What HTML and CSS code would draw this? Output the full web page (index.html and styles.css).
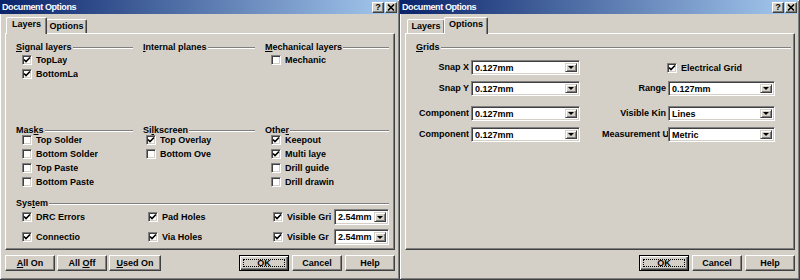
FILE: index.html
```html
<!DOCTYPE html>
<html lang="en">
<head>
    <meta charset="UTF-8">
    <title>Document Options</title>
    <link rel="stylesheet" href="styles.css">
</head>
<body>
<div class="screen">

    <!-- Dialog 1: Layers tab -->
    <div class="dialog">
        <div class="titlebar">
            <span class="title-text">Document Options</span>
            <span class="caption-btns">
                <span class="cap-btn">?</span>
                <span class="cap-btn"><svg width="8" height="7" viewBox="0 0 8 7"><path d="M1 0.5 L7 6.5 M7 0.5 L1 6.5" stroke="#000" stroke-width="1.6"/></svg></span>
            </span>
        </div>
        <div class="dialog-body">
            <div class="tabs">
                <div class="tab tab-layers active">Layers</div>
                <div class="tab tab-options">Options</div>
            </div>
            <div class="tab-panel">
                <div class="layer-grid">
                    <div class="group">
                        <div class="group-head"><span><u>S</u>ignal layers</span></div>
                        <div class="check-list ind-6">
                            <div class="check"><span class="box"><svg width="8" height="8" viewBox="0 0 8 8"><path d="M1 3.5 L3 5.5 L7 1.5" fill="none" stroke="#000" stroke-width="1.6"/></svg></span><span class="check-text">TopLay</span></div>
                            <div class="check"><span class="box"><svg width="8" height="8" viewBox="0 0 8 8"><path d="M1 3.5 L3 5.5 L7 1.5" fill="none" stroke="#000" stroke-width="1.6"/></svg></span><span class="check-text">BottomLa</span></div>
                        </div>
                    </div>
                    <div class="group">
                        <div class="group-head"><span><u>I</u>nternal planes</span></div>
                    </div>
                    <div class="group last">
                        <div class="group-head"><span><u>M</u>echanical layers</span></div>
                        <div class="check-list ind-6">
                            <div class="check"><span class="box"></span><span class="check-text">Mechanic</span></div>
                        </div>
                    </div>

                    <div class="group">
                        <div class="group-head"><span>Mas<u>k</u>s</span></div>
                        <div class="check-list up ind-6">
                            <div class="check"><span class="box"></span><span class="check-text">Top Solder</span></div>
                            <div class="check"><span class="box"></span><span class="check-text">Bottom Solder</span></div>
                            <div class="check"><span class="box"></span><span class="check-text">Top Paste</span></div>
                            <div class="check"><span class="box"></span><span class="check-text">Bottom Paste</span></div>
                        </div>
                    </div>
                    <div class="group">
                        <div class="group-head"><span>Si<u>l</u>kscreen</span></div>
                        <div class="check-list up ind-3">
                            <div class="check"><span class="box"><svg width="8" height="8" viewBox="0 0 8 8"><path d="M1 3.5 L3 5.5 L7 1.5" fill="none" stroke="#000" stroke-width="1.6"/></svg></span><span class="check-text">Top Overlay</span></div>
                            <div class="check"><span class="box"></span><span class="check-text">Bottom Ove</span></div>
                        </div>
                    </div>
                    <div class="group last">
                        <div class="group-head"><span>Othe<u>r</u></span></div>
                        <div class="check-list up ind-6">
                            <div class="check"><span class="box"><svg width="8" height="8" viewBox="0 0 8 8"><path d="M1 3.5 L3 5.5 L7 1.5" fill="none" stroke="#000" stroke-width="1.6"/></svg></span><span class="check-text">Keepout</span></div>
                            <div class="check"><span class="box"><svg width="8" height="8" viewBox="0 0 8 8"><path d="M1 3.5 L3 5.5 L7 1.5" fill="none" stroke="#000" stroke-width="1.6"/></svg></span><span class="check-text">Multi laye</span></div>
                            <div class="check"><span class="box"></span><span class="check-text">Drill guide</span></div>
                            <div class="check"><span class="box"></span><span class="check-text">Drill drawin</span></div>
                        </div>
                    </div>

                    <div class="group system">
                        <div class="group-head"><span>Sys<u>t</u>em</span></div>
                        <div class="system-grid">
                            <div class="sys-cell ind-6">
                                <div class="check"><span class="box"><svg width="8" height="8" viewBox="0 0 8 8"><path d="M1 3.5 L3 5.5 L7 1.5" fill="none" stroke="#000" stroke-width="1.6"/></svg></span><span class="check-text">DRC Errors</span></div>
                            </div>
                            <div class="sys-cell ind-5">
                                <div class="check"><span class="box"><svg width="8" height="8" viewBox="0 0 8 8"><path d="M1 3.5 L3 5.5 L7 1.5" fill="none" stroke="#000" stroke-width="1.6"/></svg></span><span class="check-text">Pad Holes</span></div>
                            </div>
                            <div class="sys-cell ind-8">
                                <div class="check"><span class="box"><svg width="8" height="8" viewBox="0 0 8 8"><path d="M1 3.5 L3 5.5 L7 1.5" fill="none" stroke="#000" stroke-width="1.6"/></svg></span><span class="check-text">Visible Gri</span></div>
                                <div class="combo combo-small"><span class="combo-text">2.54mm</span><span class="combo-btn"><span class="arrow"></span></span></div>
                            </div>
                            <div class="sys-cell ind-6">
                                <div class="check"><span class="box"><svg width="8" height="8" viewBox="0 0 8 8"><path d="M1 3.5 L3 5.5 L7 1.5" fill="none" stroke="#000" stroke-width="1.6"/></svg></span><span class="check-text">Connectio</span></div>
                            </div>
                            <div class="sys-cell ind-5">
                                <div class="check"><span class="box"><svg width="8" height="8" viewBox="0 0 8 8"><path d="M1 3.5 L3 5.5 L7 1.5" fill="none" stroke="#000" stroke-width="1.6"/></svg></span><span class="check-text">Via Holes</span></div>
                            </div>
                            <div class="sys-cell ind-8">
                                <div class="check"><span class="box"><svg width="8" height="8" viewBox="0 0 8 8"><path d="M1 3.5 L3 5.5 L7 1.5" fill="none" stroke="#000" stroke-width="1.6"/></svg></span><span class="check-text">Visible Gr</span></div>
                                <div class="combo combo-small"><span class="combo-text">2.54mm</span><span class="combo-btn"><span class="arrow"></span></span></div>
                            </div>
                        </div>
                    </div>
                </div>
            </div>
            <div class="btn-row">
                <div class="btn-group">
                    <div class="btn"><span><u>A</u>ll On</span></div>
                    <div class="btn"><span>All <u>O</u>ff</span></div>
                    <div class="btn wide"><span><u>U</u>sed On</span></div>
                </div>
                <div class="btn-group right">
                    <div class="btn default"><span class="focus">OK</span></div>
                    <div class="btn"><span>Cancel</span></div>
                    <div class="btn"><span>Help</span></div>
                </div>
            </div>
        </div>
    </div>

    <!-- Dialog 2: Options tab -->
    <div class="dialog">
        <div class="titlebar">
            <span class="title-text">Document Options</span>
            <span class="caption-btns">
                <span class="cap-btn">?</span>
                <span class="cap-btn"><svg width="8" height="7" viewBox="0 0 8 7"><path d="M1 0.5 L7 6.5 M7 0.5 L1 6.5" stroke="#000" stroke-width="1.6"/></svg></span>
            </span>
        </div>
        <div class="dialog-body">
            <div class="tabs">
                <div class="tab tab-layers">Layers</div>
                <div class="tab tab-options active">Options</div>
            </div>
            <div class="tab-panel options-panel">
                <div class="group-head grids-head"><span><u>G</u>rids</span></div>
                <div class="options-grid">
                    <div class="field-label">Snap X</div>
                    <div class="combo"><span class="combo-text">0.127mm</span><span class="combo-btn"><span class="arrow"></span></span></div>
                    <div class="field-label"></div>
                    <div class="check elec"><span class="box"><svg width="8" height="8" viewBox="0 0 8 8"><path d="M1 3.5 L3 5.5 L7 1.5" fill="none" stroke="#000" stroke-width="1.6"/></svg></span><span class="check-text">Electrical Grid</span></div>

                    <div class="field-label">Snap Y</div>
                    <div class="combo"><span class="combo-text">0.127mm</span><span class="combo-btn"><span class="arrow"></span></span></div>
                    <div class="field-label">Range</div>
                    <div class="combo"><span class="combo-text">0.127mm</span><span class="combo-btn"><span class="arrow"></span></span></div>

                    <div class="field-label">Component</div>
                    <div class="combo"><span class="combo-text">0.127mm</span><span class="combo-btn"><span class="arrow"></span></span></div>
                    <div class="field-label">Visible Kin</div>
                    <div class="combo"><span class="combo-text">Lines</span><span class="combo-btn"><span class="arrow"></span></span></div>

                    <div class="field-label">Component</div>
                    <div class="combo"><span class="combo-text">0.127mm</span><span class="combo-btn"><span class="arrow"></span></span></div>
                    <div class="field-label">Measurement U</div>
                    <div class="combo"><span class="combo-text">Metric</span><span class="combo-btn"><span class="arrow"></span></span></div>
                </div>
            </div>
            <div class="btn-row">
                <div class="btn-group right">
                    <div class="btn default"><span class="focus">OK</span></div>
                    <div class="btn"><span>Cancel</span></div>
                    <div class="btn"><span>Help</span></div>
                </div>
            </div>
        </div>
    </div>

</div>
</body>
</html>
```

FILE: styles.css
```css
* {
    box-sizing: border-box;
}
body {
    margin: 0;
    background-color: #d4d0c8;
    font-family: "Liberation Sans", Arial, sans-serif;
    font-size: 9px;
    font-weight: bold;
    color: #000;
}
.screen {
    display: flex;
    width: 800px;
    height: 280px;
}
.dialog {
    width: 400px;
    height: 280px;
    background-color: #d4d0c8;
    border-right: 1px solid #404040;
    border-bottom: 1px solid #404040;
    box-shadow: inset 1px 1px #fff, inset -1px -1px #808080;
    display: flex;
    flex-direction: column;
}

/* title bar */
.titlebar {
    height: 14px;
    margin-right: 1px;
    padding: 0 1px 0 2px;
    background: linear-gradient(to right, #0a246a, #a6caf0);
    color: #fff;
    display: flex;
    align-items: center;
    justify-content: space-between;
}
.title-text {
    letter-spacing: -0.4px;
}
.caption-btns {
    display: flex;
    gap: 1px;
}
.cap-btn {
    width: 12px;
    height: 11px;
    background-color: #d4d0c8;
    border: 1px solid;
    border-color: #fff #404040 #404040 #fff;
    box-shadow: inset -1px -1px #808080;
    color: #000;
    display: flex;
    align-items: center;
    justify-content: center;
    line-height: 1;
}

.dialog-body {
    padding: 3px 4px 0 5px;
}

/* tabs */
.tabs {
    display: flex;
    align-items: flex-end;
    height: 16px;
    padding-left: 2px;
}
.tab {
    height: 14px;
    border: 1px solid;
    border-bottom: none;
    border-color: #fff #404040 #fff #fff;
    border-radius: 2px 2px 0 0;
    box-shadow: inset -1px 0 #808080;
    text-align: center;
    line-height: 13px;
}
.tab-layers {
    width: 38px;
}
.tab-options {
    width: 41px;
}
.tab.active {
    position: relative;
    z-index: 1;
    height: 17px;
    margin: 0 -1px -1px;
    background-color: #d4d0c8;
    line-height: 12px;
}
.tab-layers.active {
    width: 41px;
}
.tab-options.active {
    width: 44px;
}
.tab-panel {
    height: 217px;
    border: 1px solid;
    border-color: #fff #404040 #404040 #fff;
    box-shadow: inset -1px -1px #808080;
    padding: 8px 5px 0 10px;
}

/* group headings */
.group-head {
    display: flex;
    align-items: center;
    height: 11px;
    line-height: 11px;
    margin-right: 10px;
    white-space: nowrap;
}
.group-head::after {
    content: "";
    flex: 1;
    border-top: 1px solid #808080;
    border-bottom: 1px solid #fff;
    margin-left: 1px;
}
.group.last .group-head,
.group.system .group-head {
    margin-right: 0;
}

.layer-grid {
    display: grid;
    grid-template-columns: 127px 122px 1fr;
    grid-template-rows: 83px 73px auto;
}
.group.system {
    grid-column: 1 / 4;
}
.check-list.up {
    margin-top: -3px;
}
.ind-3 { padding-left: 3px; }
.ind-5 { padding-left: 5px; }
.ind-6 { padding-left: 6px; }
.ind-8 { padding-left: 8px; }

/* checkboxes */
.check {
    display: flex;
    align-items: center;
    height: 14px;
}
.box {
    width: 10px;
    height: 10px;
    flex: none;
    margin-right: 4px;
    background-color: #fff;
    border: 1px solid;
    border-color: #808080 #fff #fff #808080;
    box-shadow: inset 1px 1px #404040, inset -1px -1px #d4d0c8;
    display: flex;
    align-items: center;
    justify-content: center;
}
.check-text {
    white-space: nowrap;
    overflow: hidden;
}

.system-grid {
    display: grid;
    grid-template-columns: 127px 122px 1fr;
    grid-auto-rows: 20px;
    margin-top: -2px;
}
.sys-cell {
    display: flex;
    align-items: center;
}

/* combo boxes */
.combo {
    display: flex;
    align-items: center;
    height: 15px;
    padding: 2px;
    background-color: #fff;
    border: 1px solid;
    border-color: #808080 #fff #fff #808080;
    box-shadow: inset 1px 1px #404040, inset -1px -1px #d4d0c8;
}
.combo-small {
    width: 55px;
    height: 16px;
    margin-left: auto;
}
.combo-text {
    flex: 1;
    padding-left: 1px;
    white-space: nowrap;
    overflow: hidden;
}
.combo-btn {
    width: 12px;
    height: 100%;
    background-color: #d4d0c8;
    border: 1px solid;
    border-color: #d4d0c8 #404040 #404040 #d4d0c8;
    box-shadow: inset 1px 1px #fff, inset -1px -1px #808080;
    display: flex;
    align-items: center;
    justify-content: center;
}
.arrow {
    width: 0;
    height: 0;
    border-left: 3px solid transparent;
    border-right: 3px solid transparent;
    border-top: 3px solid #000;
}

/* options tab */
.options-panel {
    padding-right: 1px;
}
.grids-head {
    margin-right: 2px;
}
.options-grid {
    display: grid;
    grid-template-columns: 52px 109px 88px 107px;
    grid-template-rows: 15px 21px 25px 21px;
    align-items: end;
    margin: 7px 0 0 3px;
}
.field-label {
    height: 15px;
    line-height: 15px;
    padding-right: 2px;
    text-align: right;
    white-space: nowrap;
    overflow: hidden;
}
.options-grid .field-label:nth-child(4n+3) {
    margin-left: 22px;
}
.check.elec {
    height: 15px;
    margin-left: -1px;
}

/* buttons */
.btn-row {
    display: flex;
    height: 16px;
    margin-top: 5px;
}
.btn-group {
    display: flex;
    gap: 2px;
}
.btn-group.right {
    margin-left: auto;
    gap: 3px;
}
.btn {
    width: 50px;
    height: 16px;
    border: 1px solid;
    border-color: #fff #404040 #404040 #fff;
    box-shadow: inset -1px -1px #808080;
    display: flex;
    align-items: center;
    justify-content: center;
    white-space: nowrap;
}
.btn.wide {
    width: 52px;
}
.btn.default {
    border-color: #000;
    box-shadow: inset 1px 1px #fff, inset -1px -1px #404040, inset -2px -2px #808080;
    padding: 3px;
}
.focus {
    flex: 1;
    height: 100%;
    border: 1px dotted #000;
    display: flex;
    align-items: center;
    justify-content: center;
}
```
